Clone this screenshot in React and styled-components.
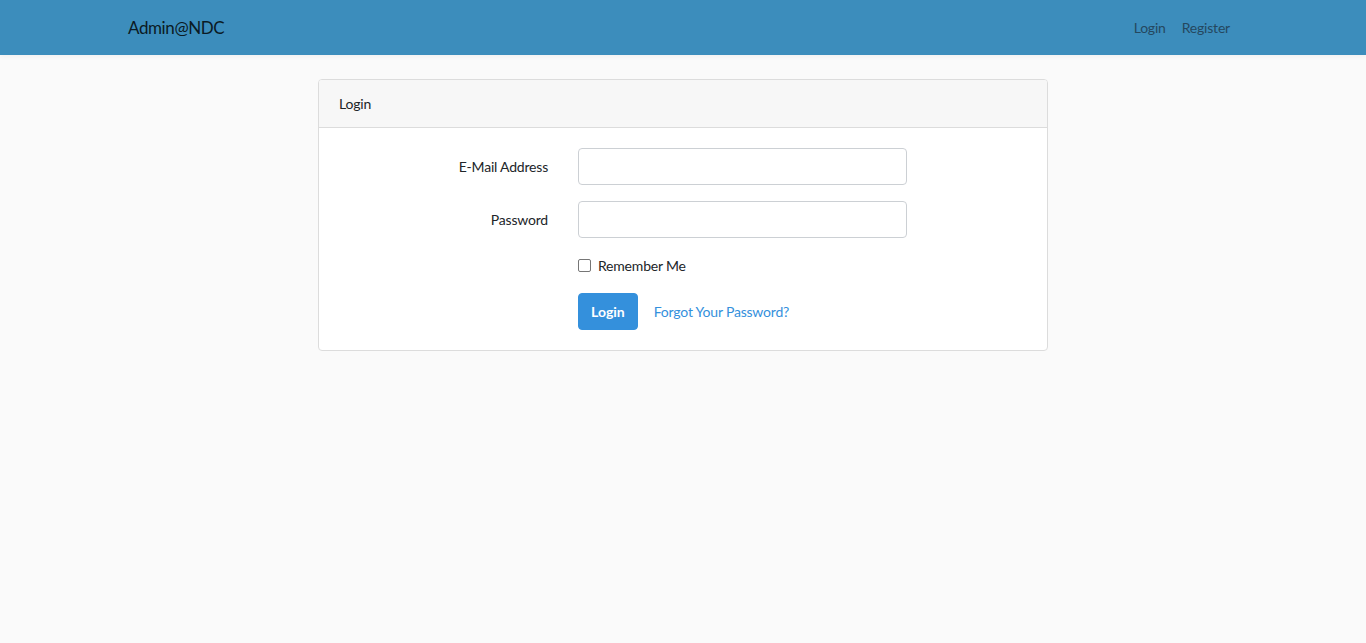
import styled, {createGlobalStyle} from "styled-components";

const GlobalStyle = createGlobalStyle`
  * {
    box-sizing: border-box;
  }

  body {
    margin: 0;
    background: #fafafa;
    font-family: Lato, "Noto Sans", sans-serif;
    font-size: 14px;
    letter-spacing: -0.2px;
    color: #212529;
  }
`;

const Navbar = styled.nav`
  height: 55px;
  background: #3c8dbc;
  box-shadow: 0 2px 4px rgba(0, 0, 0, 0.04);
`;

const NavContainer = styled.div`
  width: 1140px;
  height: 100%;
  margin: 0 auto;
  padding: 0 15px;
  display: flex;
  align-items: center;
  justify-content: space-between;
`;

const Brand = styled.a`
  font-size: 17px;
  letter-spacing: -0.4px;
  color: #0b1a24;
  text-decoration: none;
  cursor: pointer;
`;

const NavLinks = styled.div`
  display: flex;
`;

const NavLink = styled.a`
  padding: 0 8px;
  font-size: 14px;
  color: #25485f;
  text-decoration: none;
  cursor: pointer;
`;

const Main = styled.main`
  padding-top: 24px;
`;

const Card = styled.div`
  width: 730px;
  margin: 0 auto;
  background: #fff;
  border: 1px solid #dcdcdc;
  border-radius: 4px;
  overflow: hidden;
`;

const CardHeader = styled.div`
  height: 48px;
  padding: 0 20px;
  display: flex;
  align-items: center;
  background: #f7f7f7;
  border-bottom: 1px solid #dcdcdc;
`;

const Form = styled.form`
  padding: 20px;
  display: grid;
  grid-template-columns: 209px 329px;
  column-gap: 30px;
  row-gap: 16px;
  align-items: center;
`;

const Label = styled.label`
  text-align: right;
`;

const Input = styled.input`
  width: 100%;
  height: 37px;
  padding: 6px 12px;
  border: 1px solid #ccd0d4;
  border-radius: 4px;
  font: inherit;
  background: #fff;
`;

const CheckRow = styled.label`
  grid-column: 2;
  display: flex;
  align-items: center;
  gap: 7px;
  height: 23px;
`;

const Checkbox = styled.span`
  width: 13px;
  height: 13px;
  border: 1.5px solid #767676;
  border-radius: 2px;
  background: #fff;
`;

const Actions = styled.div`
  grid-column: 2;
  display: flex;
  align-items: center;
  gap: 16px;
`;

const Button = styled.button`
  height: 37px;
  padding: 0 12px;
  border: 1px solid #3490dc;
  border-radius: 4px;
  background: #3490dc;
  color: #fff;
  font: inherit;
  font-weight: 700;
  cursor: pointer;
`;

const Link = styled.a`
  color: #3490dc;
  text-decoration: none;
  cursor: pointer;
`;

const App = () => {
    return (
        <>
            <GlobalStyle/>
            <Navbar>
                <NavContainer>
                    <Brand>Admin@NDC</Brand>
                    <NavLinks>
                        <NavLink>Login</NavLink>
                        <NavLink>Register</NavLink>
                    </NavLinks>
                </NavContainer>
            </Navbar>
            <Main>
                <Card>
                    <CardHeader>Login</CardHeader>
                    <Form onSubmit={e => e.preventDefault()}>
                        <Label htmlFor="email">E-Mail Address</Label>
                        <Input id="email" type="email"/>
                        <Label htmlFor="password">Password</Label>
                        <Input id="password" type="password"/>
                        <CheckRow>
                            <Checkbox/>
                            Remember Me
                        </CheckRow>
                        <Actions>
                            <Button type="submit">Login</Button>
                            <Link>Forgot Your Password?</Link>
                        </Actions>
                    </Form>
                </Card>
            </Main>
        </>
    );
};

export default App;
